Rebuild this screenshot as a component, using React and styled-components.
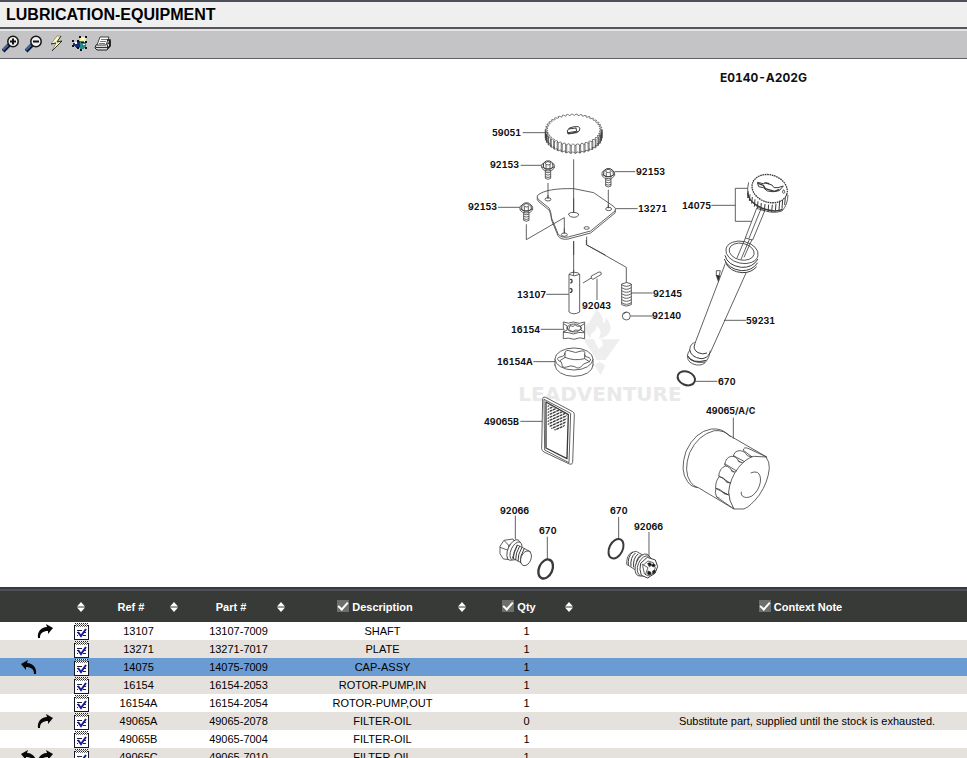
import React, { useState } from "react";
import styled, { createGlobalStyle } from "styled-components";

const GlobalStyle = createGlobalStyle`
  * { box-sizing: border-box; }
  body {
    margin: 0;
    background: #fff;
    color: #000;
    font-family: "Liberation Sans", Arial, sans-serif;
  }
`;

const Page = styled.div`
  display: flex;
  flex-direction: column;
  height: 100vh;
  overflow: hidden;
`;

const TitleBar = styled.header`
  padding: 3px 6px 2px;
  background: #f0eff0;
  border-top: 2px solid #4c4f57;
  border-bottom: 2px solid #55565a;
`;

const Title = styled.h1`
  margin: 0;
  font-size: 16px;
  line-height: 20px;
  font-weight: bold;
`;

const Toolbar = styled.div`
  display: flex;
  align-items: center;
  gap: 5px;
  padding: 3px 2px 4px;
  background: #c4c3c5;
  border-top: 2px solid #e4e3e5;
  border-bottom: 1px solid #5f6064;
`;

const ToolButton = styled.button`
  display: block;
  width: 18px;
  height: 20px;
  padding: 1px 0;
  border: 0;
  background: none;
  cursor: pointer;

  svg { display: block; }
`;

const DiagramPanel = styled.main`
  flex: none;
`;

const DiagramSvg = styled.svg`
  display: block;
  width: 100%;
  height: 528px;
`;

const PartLabel = styled.text`
  font-family: Inter, sans-serif;
  font-size: ${(p) => (p.$large ? "12px" : "9px")};
  font-weight: 700;
  font-variant-numeric: tabular-nums;
  fill: #111;
`;

const Watermark = styled.text`
  font-family: "DejaVu Sans", sans-serif;
  font-size: 20px;
  font-weight: bold;
  fill: #e9e9e9;
`;

const PartsPanel = styled.section`
  flex: 1;
  min-height: 0;
  overflow: hidden;
  border-top: 2px solid #383a37;
`;

const PartsTable = styled.table`
  width: 100%;
  border-collapse: collapse;
  table-layout: fixed;
  font-size: 11px;
`;

const Col = styled.col`
  width: ${(p) => (p.$width ? `${p.$width}px` : "auto")};
`;

const HeadRow = styled.tr`
  height: 32px;
  background: #383a37;
  border-top: 2px solid #4e5159;
`;

const HeadCell = styled.th`
  padding: 0 7px 0 ${(p) => (p.$wide ? "69px" : "0")};
  color: #fff;
  font-weight: bold;
`;

const HeadContent = styled.div`
  display: flex;
  align-items: center;
`;

const HeadLabel = styled.label`
  display: flex;
  flex: 1;
  justify-content: center;
  gap: 3px;
  line-height: 14px;
`;

const Check = styled.input`
  appearance: none;
  display: grid;
  place-content: center;
  width: 12px;
  height: 12px;
  margin: 0;
  background: #6d6e6d;

  &:checked::after {
    content: "";
    width: 4px;
    height: 8px;
    margin-bottom: 2px;
    border: solid #fff;
    border-width: 0 2px 2px 0;
    transform: rotate(42deg);
  }
`;

const SortButton = styled.button`
  width: 8px;
  height: 10px;
  padding: 0;
  border: 0;
  background: none;
  cursor: pointer;

  svg { display: block; }
`;

const SortSpace = styled.span`
  width: 8px;
`;

const Row = styled.tr`
  height: 18px;
  background: ${(p) => (p.$selected ? "#6b9bd3" : p.$shaded ? "#e5e2de" : "#fff")};
`;

const Cell = styled.td`
  padding: 0 0 0 ${(p) => (p.$wide ? "67px" : "0")};
  line-height: 18px;
  text-align: center;
  white-space: nowrap;
`;

const RowTools = styled.div`
  display: grid;
  grid-template-columns: 17px 17px 19px 16px;
  justify-content: end;
  align-items: center;
  height: 18px;
  padding-right: 3px;
`;

const NoteButton = styled.button`
  grid-column: 4;
  grid-row: 1;
  padding: 0;
  margin-left: 1px;
  border: 0;
  background: none;
  cursor: pointer;

  svg { display: block; }
`;

const ArrowSlot = styled.span`
  grid-column: ${(p) => p.$column};
  grid-row: 1;

  svg { display: block; }
`;

const ZoomIcon = ({ plus }) => (
  <svg width="18" height="18" viewBox="0 0 18 18">
    <path d="M1 16 L7 10" stroke="#0b1738" strokeWidth="4" />
    <path d="M1 15 L6 10" stroke="#42689f" strokeWidth="2" />
    <circle cx="11" cy="6.5" r="5.2" fill="#f2eef0" stroke="#151515" strokeWidth="1.5" />
    <path d={plus ? "M8 6.5h6M11 3.5v6" : "M8 6.5h6"} stroke="#111" strokeWidth="2" />
  </svg>
);

const BoltIcon = () => (
  <svg width="18" height="18" viewBox="0 0 18 18">
    <path d="M9 1 L3 9 L8 8 L4 16 L14 6 L9 7 L13 1 Z" fill="#fdfbcb" stroke="#9a986b" />
    <path d="M13 1 L9 7 L14 6 L4 16 M3 9 L8 8" fill="none" stroke="#333322" />
  </svg>
);

const HotspotIcon = () => (
  <svg width="18" height="18" viewBox="0 0 18 18" shapeRendering="crispEdges">
    <path d="M9 2h6v6H9z" fill="#f6f2a0" />
    <circle cx="11" cy="10" r="4" fill="#278989" />
    <path d="M2 8l3-1 2-2 2 1v6l-3 1-4-3z" fill="#162f72" />
    <path
      d="M8 1h2v2H8zM14 1h2v2h-2zM6 5h2v2H6zM14 6h2v2h-2zM1 5h2v2H1zM1 10h2v2H1zM6 12h2v2H6zM14 12h2v2h-2zM9 14h2v2H9zM10 7h3v1h-3z"
      fill="#111"
    />
    <path d="M4 7h2v2H4zM11 3h2v2h-2zM12 9h2v1h-2z" fill="#fff" />
  </svg>
);

const PrinterIcon = () => (
  <svg width="18" height="18" viewBox="0 0 18 18">
    <path d="M2 10 L4 9 H14 L16 6 V11 L13 15 H3 L1 13 Z" fill="#d9d9d9" stroke="#222" />
    <path d="M6 2 H15 L12 10 H3 Z" fill="#fff" stroke="#444" />
    <path d="M7 4.5h6M6 6.5h6M5 8.5h6" stroke="#777" />
    <path d="M2 12.5h11M13.5 10v4" stroke="#333" />
    <path d="M13 5 L16 5 L16 11 L14 13" fill="none" stroke="#111" strokeWidth="1.5" />
  </svg>
);

const SortIcon = () => (
  <svg width="8" height="10" viewBox="0 0 8 10" fill="#fff">
    <path d="M4 0 L8 4.6 H0 Z" />
    <path d="M4 10 L0 5.4 H8 Z" />
  </svg>
);

const NoteIcon = () => (
  <svg width="15" height="17" viewBox="0 0 15 17" shapeRendering="crispEdges">
    <rect x="0.5" y="2.5" width="14" height="14" fill="#fff" stroke="#17172a" />
    <path d="M1 0.5h13M1 2.5h13" stroke="#fff" />
    <path d="M1 0.5h13M1 2.5h13" stroke="#222" strokeDasharray="1 1" />
    <path d="M2 1.5h12M2 3.5h12" stroke="#777" strokeDasharray="1 1" />
    <path d="M3 7.5h5M3 9.5h2M3 12.5h1M10 9.5h2M9 12.5h3" stroke="#222" />
    <path d="M4 9l3 4 5-7" fill="none" stroke="#17179a" strokeWidth="2" shapeRendering="auto" />
  </svg>
);

const ArrowIcon = ({ back }) => (
  <svg width="17" height="16" viewBox="0 0 17 16">
    <path
      d="M1 15 C0 9 4 4 10 4 L9 1 L16 5 L11 11 L11 8 C6 8 3 10 3 15 Z"
      transform={back ? "translate(17 0) scale(-1 1)" : undefined}
      fill="#080808"
    />
  </svg>
);

const labels = [
  [492, 136, "59051"],
  [490, 168, "92153"],
  [636, 175, "92153"],
  [468, 210, "92153"],
  [638, 212, "13271"],
  [682, 209, "14075"],
  [517, 298, "13107"],
  [582, 309, "92043"],
  [653, 297, "92145"],
  [652, 319, "92140"],
  [511, 333, "16154"],
  [497, 365, "16154A"],
  [484, 425, "49065B"],
  [746, 324, "59231"],
  [718, 385, "670"],
  [706, 414, "49065/A/C"],
  [500, 514, "92066"],
  [539, 534, "670"],
  [610, 514, "670"],
  [634, 530, "92066"],
];

// Outline of the gear with one notch per tooth
const TEETH = 38;
const gearPoints = (offset) => {
  const points = [];
  for (let i = 0; i < TEETH * 4; i++) {
    const a = (i / (TEETH * 4)) * Math.PI * 2;
    const r = i % 4 < 2 ? 1 : 0.92;
    points.push(`${(341 + Math.cos(a) * 85 * r).toFixed(1)},${(194 + offset + Math.sin(a) * 47 * r).toFixed(1)}`);
  }
  return points.join(" ");
};

const Gear = () => {
  const sides = [];
  for (let i = 0; i < TEETH; i++) {
    [0, 1].forEach((k) => {
      const a = ((i * 4 + k) / (TEETH * 4)) * Math.PI * 2;
      if (Math.sin(a) < -0.02) return;
      const x = 341 + Math.cos(a) * 85;
      const y = 194 + Math.sin(a) * 47;
      sides.push(<path key={`${i}-${k}`} d={`M${x.toFixed(1)} ${y.toFixed(1)}v24`} />);
    });
  }
  return (
    <g strokeWidth="2">
      <polygon points={gearPoints(24)} />
      <path d="M256 194v24M426 194v24" />
      <polygon points={gearPoints(0)} />
      {sides}
      <path d="M322 198l5-8q14-7 28-5 8 3 3 12l-8 6-26 4z" strokeWidth="3" />
      <path d="M322 202l5 4 28-6M326 192l22-3 2 10-26 4" strokeWidth="3" fill="none" />
    </g>
  );
};

const HexBolt = ({ x, y }) => (
  <g transform={`translate(${x} ${y})`}>
    <path d="M-8 28v25q8 6 16 0v-25z" />
    <path d="M-8 34q8 5 16 0M-8 41q8 5 16 0M-8 48q8 5 16 0" fill="none" />
    <path d="M-19 14q0-5 6-6h26q6 1 6 6v8q-5 9-19 9t-19-9z" />
    <path d="M-14 20l1-13 8-6h11l8 6 1 13-8 5h-14z" strokeWidth="3" />
    <path d="M-8 6l7-3 8 2 2 5-8 3-8-2zM-6 13v13M6 13v13M-18 19l12 6h12l12-6" fill="none" />
  </g>
);

const plate =
  "M232 392C250 375 290 370 341 371L401 383L462 425Q470 431 465 438L392 498L325 516Q302 520 294 506L275 460Q273 440 268 430L236 404Q230 398 232 392Z";

const PumpTop = () => (
  <g transform="translate(460 65) scale(0.3333)">
    <Gear />
    <path d="M188 203h67M182 301h64M464 320h62M114 427h67M467 431h66" />
    <path d={plate} transform="translate(0 6)" />
    <path d={plate} />
    <path d="M341 283v160M264 354v48M445 374v56M199 478v46l114-66v48M341 528v42M380 515v25l56 30" fill="none" />
    <ellipse cx="264" cy="403" rx="9" ry="5" />
    <ellipse cx="446" cy="432" rx="9" ry="5" />
    <ellipse cx="313" cy="509" rx="9" ry="5" />
    <ellipse cx="380" cy="489" rx="8" ry="4" />
    <path d="M325 447q5-5 15-5t16 5q0 9-14 10t-17-10z" />
    <path d="M341 400v44M264 390v12M445 420v10M313 490v16" />
    <HexBolt x={264} y={287} />
    <HexBolt x={445} y={310} />
    <HexBolt x={199} y={413} />
  </g>
);

const PumpShaft = () => (
  <g transform="translate(480 240) scale(0.3333)">
    <path d="M281 4v98M319 0v14l120 68v46" fill="none" />
    <path d="M199 163h67M182 268h68M160 365h65M453 159h65M452 228h66M351 116v64" />
    <path d="M267 103v113q14 11 32 0V103q-2-6-16-6t-16 6z" />
    <path d="M267 103q16 9 32 0M281 90v16" fill="none" />
    <path d="M270 119q6-3 6 4t-5 5M269 147q7-3 7 4t-6 6" strokeWidth="4" fill="none" />
    <path d="M309 129l28-17" />
    <path d="M334 108l23-12q8-2 7 7l-25 15q-8-1-5-10z" />
    <path d="M425 132v62q13 9 29 0v-62q-13-9-29 0z" />
    {[134, 143, 152, 161, 170, 179, 188].map((y) => (
      <path key={y} d={`M425 ${y}q14 10 29 0`} fill="none" />
    ))}
    <circle cx="439" cy="228" r="12" />
    <path d="M431 223q2-6 9-6" fill="none" />
    <path d="M250 246q16 7 30 0 18 8 34 0v50q-14-6-32 2-16-6-32-2v-20q5-5 0-12z" />
    <path d="M250 277q14-1 30 5 16-7 34-4" fill="none" />
    <ellipse cx="282" cy="264" rx="20" ry="12" />
    <path d="M266 270l4-13 10 2 5-5 7 5 9-1 3 9-8 4-11-1-6 5z" />
    <path d="M252 252l10 6q-3 6 0 12l-10 5M312 252l-10 6q3 6 0 12l10 5" fill="none" />
    <ellipse cx="282" cy="375" rx="57" ry="34" />
    <path d="M225 357v18h114v-18z" stroke="none" />
    <path d="M225 357v20M339 357v20" />
    <ellipse cx="282" cy="357" rx="57" ry="33" />
    <path d="M255 338Q258 328 270 333Q287 342 304 333Q317 331 314 343Q313 351 327 353Q338 360 324 367Q309 371 305 378Q296 389 284 380Q272 375 260 381Q246 385 246 373Q246 364 236 362Q228 353 240 351Q255 349 255 338Z" />
    <path d="M255 338v14M314 343v13M255 352q28 12 59 4M240 362l15-10M314 356l16 10" fill="none" />
  </g>
);

const DipstickTube = () => (
  <>
    <g transform="translate(660 230) scale(0.3333)">
      <path d="M200 90L105 340q6 40 46 28l112-250z" />
      <path d="M181 122h-12v14l8 4z" />
      <path d="M169 136l6 18 4-16z" fill="#222" />
      <path d="M192 271h67M107 454h65" />
      <path d="M196 66q-8 14-2 34 16 33 70 27l24-13 7-43q1-20-18-28L218 38q-12 8-22 28z" stroke="none" />
      <ellipse cx="246" cy="67" rx="49" ry="33" transform="rotate(12 246 67)" />
      <ellipse cx="245" cy="65" rx="38" ry="25" transform="rotate(12 245 65)" />
      <path d="M195 76q7 30 49 36 34 2 50-25M193 87q10 29 51 35 33 1 49-24M196 97q13 28 50 31 28 1 44-18" fill="none" strokeWidth="3" />
      <path d="M108 338q-18 0-19 23-6 7-7 18 2 22 28 26 22 2 30-13 8-10 11-30" />
      <path d="M89 359q4 23 34 27 19 0 27-18M82 376q15 27 57 15M85 382q14 19 50 14M105 341q-8 17 9 27 15 7 27 1" fill="none" strokeWidth="3" />
      <ellipse cx="79" cy="445" rx="27" ry="20" transform="rotate(22 79 445)" strokeWidth="6" />
      <path d="M258 20L231 84M270 24L243 88M252 82L278 24" fill="none" />
    </g>
    <g transform="translate(670 65) scale(0.3333)">
      <path d="M124 421h72M237 370h-41v99h49" fill="none" />
      <path d="M260 430L226 519l22 6L284 438z" />
      <path d="M272 434L237 520" />
      <path d="M236 352q-4 14-3 36 8 28 45 46 28 14 58 4 17-18 18-48" />
      {[[235, 379, 20], [240, 388, 20], [247, 396, 20], [255, 403, 22], [264, 409, 22], [274, 414, 22], [285, 417, 23], [296, 419, 22], [307, 419, 22], [318, 416, 23], [329, 411, 24], [338, 404, 27], [346, 396, 24]].map(([x, y, h]) => (
        <path key={x} d={`M${x} ${y}l-2 ${h}`} strokeWidth="3" />
      ))}
      <ellipse cx="299" cy="371" rx="54" ry="41" transform="rotate(18 299 371)" strokeWidth="4" strokeDasharray="5 2" />
      <ellipse cx="300" cy="371" rx="50" ry="37" transform="rotate(18 300 371)" stroke="none" />
      <path d="M233 384q2 22 29 38 42 25 76 11" fill="none" strokeWidth="4" />
      <path d="M262 352l18 4 6-2 20 6 6 8h12l16-5-12 14q-20 6-36 1l-12-10-14-3z" strokeWidth="3" />
      <path d="M264 355l16 6 6 10 28 8 14-6M284 353l14 3" fill="none" strokeWidth="4" />
      <path d="M341 374q-7 9 0 11 7-1 0-11z" />
    </g>
  </>
);

const ScreenAndFilter = () => (
  <>
    <g transform="translate(480 390) scale(0.3333)">
      <path d="M121 94h67" />
      <path d="M188 26q1-7 9-4l81 43q5 3 5 9l-5 143q-2 9-10 5l-76-36q-7-4-7-10z" />
      <path d="M192 28l80 42-5 148-73-38z" fill="none" />
      <path d="M198 36l67 38-4 132-63-32z" strokeWidth="4" />
      <clipPath id="mesh"><path d="M203 42l57 31q1 41-22 50-24 1-35-20z" /></clipPath>
      <g clipPath="url(#mesh)">
        {[42, 51, 60, 69, 78, 87, 96, 105, 114, 123, 132].map((y) => (
          <path key={y} d={`M199 ${y}l65-30`} strokeWidth="4" strokeDasharray="9 2" />
        ))}
      </g>
    </g>
    <g transform="translate(660 395) scale(0.3333)">
      <path d="M204 119q-18-20-50-17-49 8-76 67-20 60 5 91 10 16 32 18L222 342L320 186Z" />
      <path d="M213 126q-20-22-50-19-49 12-74 66-20 56 3 89 9 12 20 15" fill="none" />
      <path d="M250 166Q251 155 264 160L320 186L282 190Z" />
      <path d="M220 186Q222 168 238 167Q254 167 262 182L282 188L250 208Z" />
      <path d="M194 210Q197 187 214 184Q230 183 236 200L254 205L226 234Z" />
      <path d="M176 244Q178 220 196 213Q210 214 216 230L230 232L210 268Z" />
      <path d="M167 280Q166 258 178 245Q192 245 200 262L212 264L206 300Z" />
      <path d="M170 306Q163 292 168 280Q182 280 192 296L208 300L212 324Z" />
      <path d="M170 306L222 342L212 318" />
      <path d="M281 184L318 186Q329 200 328 220Q324 262 298 300Q272 334 252 342L222 342Q206 316 206 290Q210 250 236 217Q258 190 281 184Z" />
      <path d="M220 182l34 18M194 206l36 22M177 243l35 22M167 280l38 20" fill="none" />
      <path d="M272 234Q282 229 292 232Q304 240 301 262Q296 288 276 303Q258 312 247 303Q242 298 244 290" fill="none" />
      <path d="M220 68v63" />
    </g>
  </>
);

const DrainPlugs = () => (
  <g transform="translate(480 495) scale(0.3333)">
    <path d="M106 62v71M202 125v70M416 66v67M507 111v82" />
    <path d="M60 154l12-18 27-4 9 13-6 31-13 18-19-2-10-16z" />
    <path d="M72 136l14 15-4 41M86 151l22-8M60 157l22 8" fill="none" />
    <ellipse cx="101" cy="165" rx="17" ry="33" transform="rotate(24 101 165)" />
    <ellipse cx="108" cy="168" rx="15" ry="29" transform="rotate(24 108 168)" />
    <path d="M112 150l39 20-15 40-39-21z" />
    {[108, 115, 122, 129].map((x) => (
      <path key={x} d={`M${x + 4} ${150 + (x - 108) / 2}q-13 21-12 42`} fill="none" strokeWidth="3" />
    ))}
    <ellipse cx="138" cy="190" rx="15" ry="23" transform="rotate(22 138 190)" />
    <ellipse cx="197" cy="222" rx="20" ry="30" transform="rotate(24 197 222)" strokeWidth="7" />
    <ellipse cx="408" cy="161" rx="20" ry="31" transform="rotate(26 408 161)" strokeWidth="6" />
    <path d="M455 172q-16 9-15 36l39 25 26-43-36-21z" />
    {[448, 456, 464, 472].map((x) => (
      <path key={x} d={`M${x + 11} ${171 + (x - 448) / 3}q-17 13-14 41`} fill="none" strokeWidth="3" />
    ))}
    <ellipse cx="488" cy="210" rx="20" ry="35" transform="rotate(23 488 210)" />
    <ellipse cx="494" cy="213" rx="20" ry="32" transform="rotate(23 494 213)" />
    <path d="M482 205l20-18 24 8 7 20-8 20-22 14-19-8-4-18z" strokeWidth="3" />
    <path d="M488 212l16-14 16 5 6 16-7 16-15 8-11-7z" />
    <path d="M503 205l8-2 4 6-8 5zM519 206l7 4-4 6-7-3zM504 228l9 4-1 8-9-2zM518 228l7-3 1 7-7 5z" fill="#111" />
    <path d="M485 207l19 11M504 218l-8 22M507 216l12-8" fill="none" />
  </g>
);

const Diagram = () => (
  <DiagramSvg viewBox="0 59 967 528" role="img" aria-label="Lubrication equipment">
    <g transform="translate(480 240) scale(0.3333)" fill="#eeeeee">
      <path d="M349 208q27 24 18 42 13-4 10-19 24 28 10 48-14 17-31 17 14-23-6-38-2 16-13 21-8 5-4 16-23-15-14-39 17-16 30-48z" />
      <path d="M310 298h32l14 30 14-14-8-16h58l-44 62h-26zM343 376l15-11 18 11-14 30z" />
    </g>
    <Watermark x="600" y="401" textAnchor="middle">LEADVENTURE</Watermark>
    <g fill="#fff" stroke="#3a3a3a" strokeWidth="2.4" strokeLinejoin="round">
      <PumpTop />
      <PumpShaft />
      <DipstickTube />
      <ScreenAndFilter />
      <DrainPlugs />
    </g>
    {labels.map(([x, y, text]) => (
      <PartLabel key={`${x}-${y}`} x={x} y={y}>{text}</PartLabel>
    ))}
    <PartLabel $large x="720" y="82">E0140-A202G</PartLabel>
  </DiagramSvg>
);

const parts = [
  { ref: "13107", part: "13107-7009", description: "SHAFT", qty: 1, next: true },
  { ref: "13271", part: "13271-7017", description: "PLATE", qty: 1 },
  { ref: "14075", part: "14075-7009", description: "CAP-ASSY", qty: 1, back: true },
  { ref: "16154", part: "16154-2053", description: "ROTOR-PUMP,IN", qty: 1 },
  { ref: "16154A", part: "16154-2054", description: "ROTOR-PUMP,OUT", qty: 1 },
  { ref: "49065A", part: "49065-2078", description: "FILTER-OIL", qty: 0, next: true, note: "Substitute part, supplied until the stock is exhausted." },
  { ref: "49065B", part: "49065-7004", description: "FILTER-OIL", qty: 1 },
  { ref: "49065C", part: "49065-7010", description: "FILTER-OIL", qty: 1, back: true, next: true },
];

const columns = [
  { title: "", width: 92, sort: true },
  { title: "Ref #", width: 93, sort: true },
  { title: "Part #", width: 107, sort: true },
  { title: "Description", width: 181, sort: true, check: true },
  { title: "Qty", width: 107, sort: true, check: true },
  { title: "Context Note", check: true, wide: true },
];

const App = () => {
  const [selected, setSelected] = useState("14075");

  return (
    <Page>
      <GlobalStyle />
      <TitleBar>
        <Title>LUBRICATION-EQUIPMENT</Title>
      </TitleBar>
      <Toolbar>
        <ToolButton aria-label="Zoom in"><ZoomIcon plus /></ToolButton>
        <ToolButton aria-label="Zoom out"><ZoomIcon /></ToolButton>
        <ToolButton aria-label="Reset"><BoltIcon /></ToolButton>
        <ToolButton aria-label="Hotspots"><HotspotIcon /></ToolButton>
        <ToolButton aria-label="Print"><PrinterIcon /></ToolButton>
      </Toolbar>
      <DiagramPanel>
        <Diagram />
      </DiagramPanel>
      <PartsPanel>
        <PartsTable>
          <colgroup>
            {columns.map((c) => <Col key={c.title} $width={c.width} />)}
          </colgroup>
          <thead>
            <HeadRow>
              {columns.map((c) => (
                <HeadCell key={c.title} $wide={c.wide}>
                  <HeadContent>
                    <HeadLabel as={c.check ? "label" : "span"}>
                      {c.check && <Check type="checkbox" defaultChecked />}
                      {c.title}
                    </HeadLabel>
                    {c.sort ? (
                      <SortButton aria-label={`Sort ${c.title}`}><SortIcon /></SortButton>
                    ) : (
                      <SortSpace />
                    )}
                  </HeadContent>
                </HeadCell>
              ))}
            </HeadRow>
          </thead>
          <tbody>
            {parts.map((p, i) => (
              <Row
                key={p.ref}
                $shaded={i % 2 === 1}
                $selected={p.ref === selected}
                onClick={() => setSelected(p.ref)}
              >
                <Cell>
                  <RowTools>
                    {p.back && <ArrowSlot $column={1}><ArrowIcon back /></ArrowSlot>}
                    {p.next && <ArrowSlot $column={2}><ArrowIcon /></ArrowSlot>}
                    <NoteButton aria-label={`Note ${p.ref}`}><NoteIcon /></NoteButton>
                  </RowTools>
                </Cell>
                <Cell>{p.ref}</Cell>
                <Cell>{p.part}</Cell>
                <Cell>{p.description}</Cell>
                <Cell>{p.qty}</Cell>
                <Cell $wide>{p.note}</Cell>
              </Row>
            ))}
          </tbody>
        </PartsTable>
      </PartsPanel>
    </Page>
  );
};

export default App;
